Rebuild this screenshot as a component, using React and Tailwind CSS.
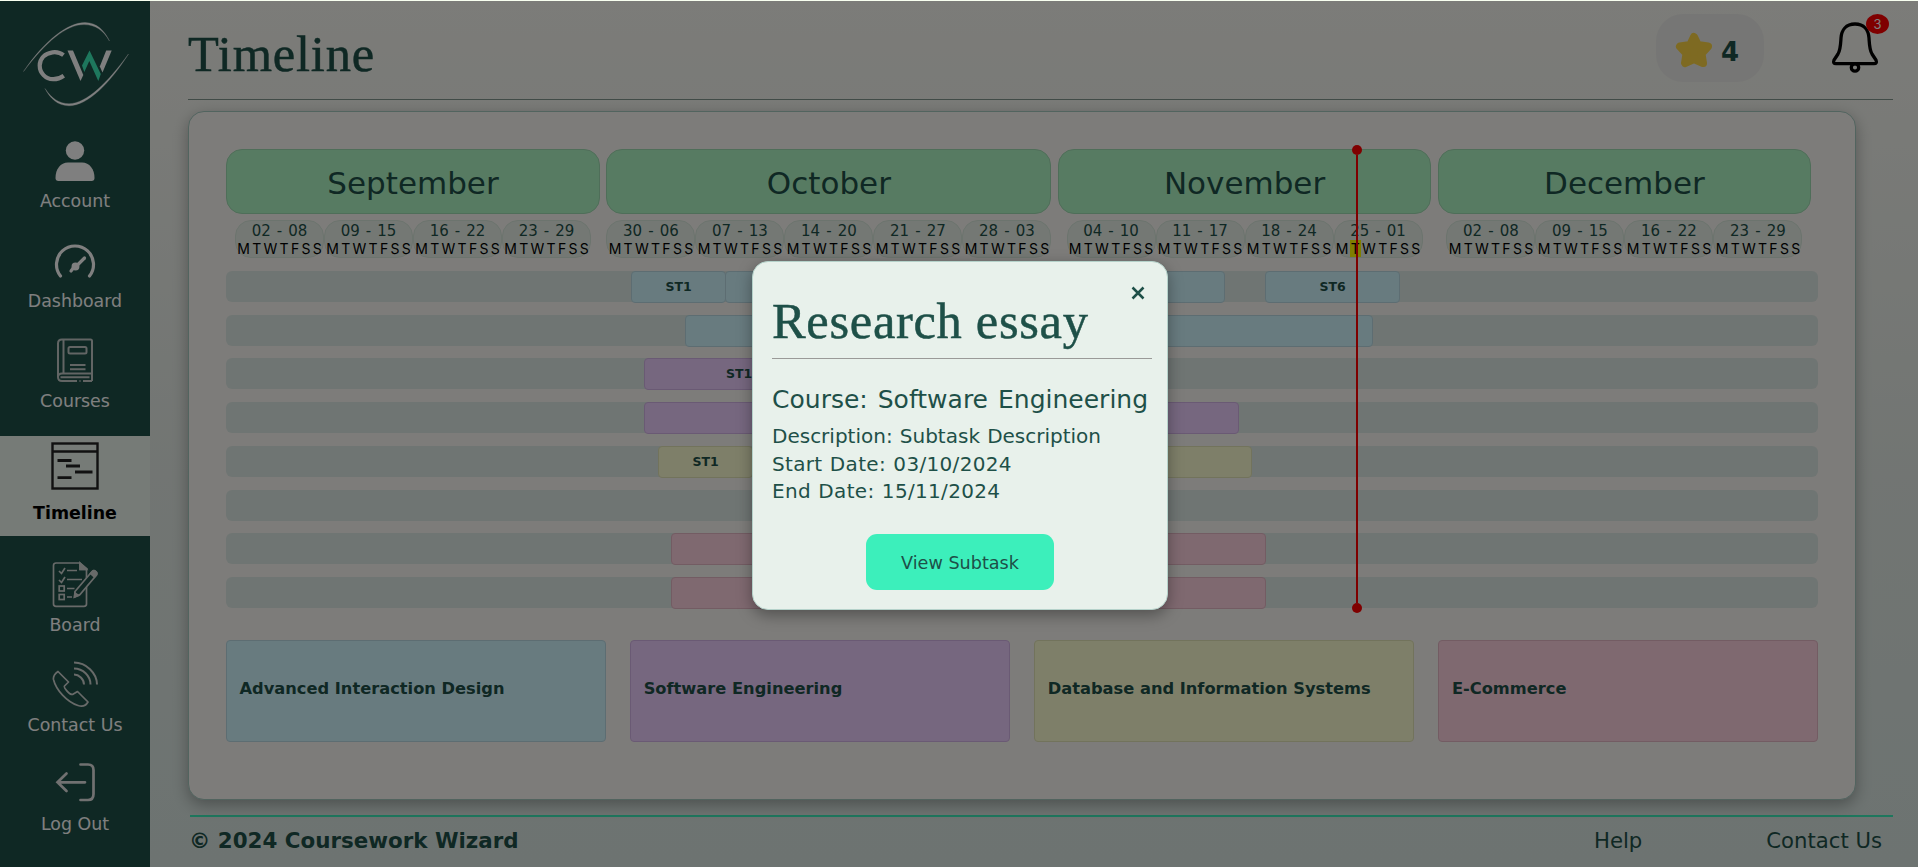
const V = "font-['DejaVu_Sans',sans-serif]";
const SERIF = "font-['Liberation_Serif',serif] [-webkit-text-stroke:0.5px_#1e5048]";

const COLORS = {
  blue: 'bg-[#d1f6ff] border-[#bbdbe5]',
  purple: 'bg-[#edcfff] border-[#d5b5e8]',
  yellow: 'bg-[#fcfed3] border-[#e4e6b8]',
  pink: 'bg-[#ffd2e0] border-[#e6b9c7]',
};

const NAV = [
  { label: 'Account', pad: 'pt-[26px] h-[100px]', gap: 'mt-[5px]', icon: AccountIcon },
  { label: 'Dashboard', pad: 'pt-[27px] h-[99px]', gap: 'mt-[4px]', icon: DashboardIcon },
  { label: 'Courses', pad: 'pt-[25px] h-[126px]', gap: 'mt-[7px]', icon: CoursesIcon },
  { label: 'Timeline', pad: 'pt-[6px] h-[100px]', gap: 'mt-[12px]', icon: TimelineIcon, active: true },
  { label: 'Board', pad: 'pt-[25px] h-[98px]', gap: 'mt-[5px]', icon: BoardIcon },
  { label: 'Contact Us', pad: 'pt-[26px] h-[100px]', gap: 'mt-[6px]', icon: PhoneIcon },
  { label: 'Log Out', pad: 'pt-[26px] h-[100px]', gap: 'mt-[5px]', icon: LogoutIcon },
];

const MONTHS = [
  { name: 'September', w: 'w-[374px]', weeks: ['02 - 08', '09 - 15', '16 - 22', '23 - 29'] },
  { name: 'October', w: 'w-[445px]', weeks: ['30 - 06', '07 - 13', '14 - 20', '21 - 27', '28 - 03'] },
  { name: 'November', w: 'w-[373.500px]', weeks: ['04 - 10', '11 - 17', '18 - 24', '25 - 01'] },
  { name: 'December', w: 'w-[373.500px]', weeks: ['02 - 08', '09 - 15', '16 - 22', '23 - 29'] },
];

const ROWS = [
  [
    { x: 405, w: 95, t: 'ST1', c: 'blue' },
    { x: 499, w: 500, c: 'blue' },
    { x: 1039, w: 135, t: 'ST6', c: 'blue' },
  ],
  [{ x: 459, w: 688, c: 'blue' }],
  [{ x: 418, w: 190, t: 'ST1', c: 'purple' }],
  [{ x: 418, w: 595, c: 'purple' }],
  [
    { x: 432, w: 95, t: 'ST1', c: 'yellow' },
    { x: 526, w: 500, c: 'yellow' },
  ],
  [],
  [{ x: 445, w: 595, c: 'pink' }],
  [{ x: 445, w: 595, c: 'pink' }],
];

const COURSES = [
  ['Advanced Interaction Design', 'blue'],
  ['Software Engineering', 'purple'],
  ['Database and Information Systems', 'yellow'],
  ['E-Commerce', 'pink'],
];

function Logo() {
  return (
    <svg width="110" height="90" viewBox="20 18 110 90" fill="none">
      <path d="M23.500 71.500 C45 40 68 22.500 85 22.500 C97 22.800 104 30 109.500 41 C103 30 96 25 84 24.600 C66 24.500 46 42 23.500 71.500Z" fill="#fff" stroke="#fff" strokeWidth=".3" strokeLinejoin="round" />
      <path d="M128.500 54 C110 83 88 105.500 69 105.800 C57 105.500 50 98 45 88.500 C52 99 59 103.500 69 103.700 C87 103.500 108 82 128.500 54Z" fill="#fff" stroke="#fff" strokeWidth=".3" strokeLinejoin="round" />
      <path d="M63.500 55.200 C60 52.400 56 51.800 52.500 52.300 C45 53.300 39.700 58.500 39.700 65.500 C39.700 73 45.500 79 53 79.200 C57 79.300 60.500 78 63.800 75.700" stroke="#fff" strokeWidth="4.200" />
      <path d="M67.500 50.500 H73 L83.300 75 L80.500 81Z" fill="#fff" />
      <path d="M106.200 50.500 H111.700 L102.500 72.500 L99.800 66.500Z" fill="#fff" />
      <path d="M82 65.500 L89.500 50.500 L100.800 74 L98.300 81 L89.300 61 L84.300 72Z" fill="#3cefbb" />
    </svg>
  );
}
function AccountIcon() {
  return (
    <svg className="shrink-0" width="48" height="48" viewBox="0 0 48 48" fill="#fff">
      <circle cx="24" cy="13.500" r="9.200" />
      <path d="M4.500 41 C4.500 32 9.500 25.500 17 25.500 H31 C38.500 25.500 43.500 32 43.500 41 C43.500 43 42.500 44 40.500 44 H7.500 C5.500 44 4.500 43 4.500 41Z" />
    </svg>
  );
}
function DashboardIcon() {
  return (
    <svg className="shrink-0" width="48" height="48" viewBox="0 0 48 48" fill="none" stroke="#fff" strokeWidth="3.200" strokeLinecap="round">
      <path d="M9.500 38 A18.500 18.500 0 1 1 38.500 38" />
      <path d="M33.500 20 L27 26.500" />
      <path d="M20 33 L23 29" />
      <circle cx="24.500" cy="28.500" r="3.200" fill="#fff" strokeWidth="1.500" />
    </svg>
  );
}
function CoursesIcon() {
  return (
    <svg className="shrink-0" width="48" height="48" viewBox="0 0 48 48" fill="none" stroke="#c4cac8" strokeWidth="2">
      <path d="M41 38.500 V6 C41 5 40.500 4.500 39.500 4.500 H11 C8.500 4.500 7 6 7 8.500 V42 C7 44.500 8.500 46 11 46 H26 M28.500 46 H29.500 M32 46 H41 M7 42 C7 40 8.500 38.500 11 38.500 H41 V46 M12.500 4.500 V38.500 M9.500 42.300 H38.500" />
      <rect x="17.500" y="12" width="18" height="6.500" rx="1.500" />
      <path d="M19 30 H34.500 M19 34.300 H34.500" />
    </svg>
  );
}
function TimelineIcon() {
  return (
    <svg className="shrink-0" width="48" height="48" viewBox="0 0 48 48" fill="none" stroke="#222" strokeWidth="2.400">
      <rect x="1.500" y="1.500" width="45" height="45" />
      <path d="M1 9.500 H47" />
      <path d="M6.500 18.500 H20.500 M15 24 H29 M24 30 H41.500 M6.500 35.700 H20.500" strokeWidth="2.800" />
    </svg>
  );
}
function BoardIcon() {
  return (
    <svg className="shrink-0" width="48" height="48" viewBox="0 0 48 48" fill="none" stroke="#d0d4d2" strokeWidth="1.700">
      <path d="M36 8.500 V8 L29 2 H5 C3.500 2 2.500 3 2.500 4.500 V43 C2.500 44.500 3.500 45.300 5 45.300 H33 C34.500 45.300 35.500 44.500 35.500 43 V26 M35.500 17 V8.500 H29 V2" />
      <path d="M29 2 L35.500 8.500 H29Z" fill="#d0d4d2" />
      <path d="M8 10 L10.500 12.500 L14 7 M8 19 L10.500 21.500 L14 16 M16 9.500 H26 M16 18.500 H31 M16 27.500 H23.500 M16 36 H21" />
      <rect x="8.200" y="25" width="5" height="5" />
      <rect x="8.200" y="33.500" width="5" height="5" />
      <path d="M24 30.500 L41 10.500 C43 8.500 47 11 45.500 14 L29 33.500 L23.500 36Z" fill="#1e5048" />
      <path d="M39.500 12.500 L41.500 10.500 C43.500 8.500 47 11.500 45.300 14 L43.500 16Z M24 32 L23.500 36 L27.500 34.500Z" fill="#d0d4d2" />
    </svg>
  );
}
function PhoneIcon() {
  return (
    <svg className="shrink-0" width="48" height="48" viewBox="0 0 48 48" fill="none" stroke="#d0d4d2" strokeWidth="1.700" strokeLinejoin="round">
      <path d="M7 11.500 L17.500 22 L13.500 26 C12.500 27 17.500 34.500 21.500 34.500 L26.500 31.500 L37 42 C35 45.500 31.500 47 27 45.500 C16 42 5 30 2.500 19.500 C2 16.500 3.500 14 7 11.500Z" />
      <path d="M23 14.500 C28 14.500 33 19 33 24.500 M23 8.500 C32 8.500 39.500 16 39.500 24.500 M23 2.500 C35 2.500 46 13 46 24.500" strokeWidth="2" />
    </svg>
  );
}
function LogoutIcon() {
  return (
    <svg className="shrink-0" width="48" height="48" viewBox="0 0 48 48" fill="none" stroke="#e2e2e2" strokeWidth="2.700" strokeLinecap="round">
      <path d="M29.500 4.500 H37 C40.500 4.500 42.500 6.500 42.500 10 V34 C42.500 38 40.500 40 37 40 H29.500" />
      <path d="M34 22.300 H6.500 M15.500 13.500 L6.500 22.300 L15.500 31" />
    </svg>
  );
}

function Sidebar() {
  return (
    <nav className={`flex w-[150px] shrink-0 flex-col bg-[#1e5048] ${V}`}>
      <div className="flex h-[110px] shrink-0 items-start justify-center pt-[17px]"><Logo /></div>
      {NAV.map(({ label, pad, gap, icon: Icon, active }) => (
        <a key={label} className={`flex shrink-0 flex-col items-center ${pad} ${active ? 'bg-[#ecf6ef] font-bold text-black' : 'text-white'}`}>
          <Icon />
          <span className={`whitespace-nowrap text-[17.400px] leading-[22px] ${gap}`}>{label}</span>
        </a>
      ))}
    </nav>
  );
}

function Header() {
  return (
    <header className="flex h-[99px] w-[1705px] items-start justify-between border-b border-[#82968f]">
      <h1 className={`pt-[24px] text-[50.500px] leading-[58px] tracking-[0.800px] text-[#1e5048] ${SERIF}`}>Timeline</h1>
      <div className="flex items-start pr-[14px]">
        <div className="mt-[13px] flex h-[68px] w-[108px] items-center rounded-[27px] bg-[#ededea] pl-[19px]">
          <svg className="mt-[3px]" width="38" height="36" viewBox="0 0 38 36" fill="#fcd544" stroke="#fcd544" strokeWidth="8" strokeLinejoin="round">
            <path d="M19 5 L22.800 13 L33 14.500 L26.500 21.500 L28 31 L19 27 L10 31 L11.500 21.500 L5 14.500 L15.200 13Z" />
          </svg>
          <span className={`ml-[8px] mt-[8px] text-[26px] font-bold text-[#1e5048] ${V}`}>4</span>
        </div>
        <div className="relative ml-[67px] mt-[19px]">
          <svg width="48" height="54" viewBox="0 0 48 54" fill="none" stroke="#000" strokeWidth="3.300">
            <path d="M24 4 C15 4 10.500 10 10 18 C9.500 26 9.500 30 7 34 L3 40 C2 42.500 3 43.700 5 43.700 H43 C45 43.700 46 42.500 45 40 L41 34 C38.500 30 38.500 26 38 18 C37.500 10 33 4 24 4Z" />
            <circle cx="24" cy="47.500" r="3.700" />
          </svg>
          <span className="absolute left-[35px] top-[-6px] flex h-[20px] w-[23px] items-center justify-center rounded-[50%] bg-[#ff0000] pt-px font-[Inter,sans-serif] text-[13px] text-white">3</span>
        </div>
      </div>
    </header>
  );
}

function Week({ range, today }) {
  return (
    <div className="flex h-[37.500px] w-[89px] flex-col items-center rounded-[16px] border border-[#d9e8dc] bg-[#e8f1e9] pt-[1px]">
      <span className={`text-[15px] leading-[18px] [word-spacing:1.300px] text-[#1e5048] ${V}`}>{range}</span>
      <span className="flex whitespace-pre font-[Inter,sans-serif] text-[14px] leading-[17px] text-black">
        {['M', 'T', 'W', 'T', 'F', 'S', 'S'].map((d, i) => (
          <span key={i} className={`px-[1.150px] ${today && i === 1 ? 'bg-[#ffff00]' : ''}`}>{d}</span>
        ))}
      </span>
    </div>
  );
}

function Timeline() {
  return (
    <section className="relative mt-[11px] h-[689px] w-[1668px] rounded-[16px] border border-[#a4c8bf] bg-[#fbf9f5] px-[37px] pt-[37px] shadow-[0_5px_15px_rgba(0,0,0,0.3)]">
      <div className="flex gap-[6.400px]">
        {MONTHS.map((m) => (
          <div key={m.name} className={`flex shrink-0 flex-col items-center ${m.w}`}>
            <div className={`flex h-[65px] w-full items-center justify-center rounded-[16px] border border-[#9fdcb2] bg-[#aff6c5] pt-[4px] text-[31px] text-[#1e5048] ${V}`}>{m.name}</div>
            <div className="mt-[6px] flex">
              {m.weeks.map((w) => <Week key={w} range={w} today={w === '25 - 01'} />)}
            </div>
          </div>
        ))}
      </div>
      <div className="mt-[13.400px] flex flex-col gap-[12.750px]">
        {ROWS.map((bars, r) => (
          <div key={r} className="relative h-[31px] rounded-[6px] bg-[#dfeae6]">
            {bars.map((b) => (
              <div key={b.x} style={{ left: b.x, width: b.w }} className={`absolute top-0 flex h-[32px] items-center justify-center rounded-[4px] border text-[12.500px] font-bold text-[#1e5048] ${V} ${COLORS[b.c]}`}>{b.t}</div>
            ))}
          </div>
        ))}
      </div>
      <div className="mt-[31.600px] grid grid-cols-4 gap-[24.600px]">
        {COURSES.map(([name, c]) => (
          <div key={name} className={`flex h-[102px] items-center whitespace-nowrap rounded-[4px] border pb-[4px] pl-[12.500px] text-[16.250px] font-bold text-[#1e5048] ${V} ${COLORS[c]}`}>{name}</div>
        ))}
      </div>
      <div className="absolute left-[1163px] top-[33px] flex h-[468px] w-[10px] flex-col items-center">
        <span className="h-[10px] w-[10px] shrink-0 rounded-full bg-[#ff0000]" />
        <span className="w-[2px] flex-1 bg-[#ff0000]" />
        <span className="h-[10px] w-[10px] shrink-0 rounded-full bg-[#ff0000]" />
      </div>
    </section>
  );
}

function Footer() {
  return (
    <footer className={`ml-[2px] mt-[15px] flex h-[52px] w-[1703px] items-start border-t-2 border-[#3cefbb] pt-[9px] text-[21.200px] leading-[30px] text-[#1e5048] ${V}`}>
      <strong className="-ml-px text-[21.400px]">© 2024 Coursework Wizard</strong>
      <span className="ml-auto">Help</span>
      <span className="ml-[124px] mr-[11px]">Contact Us</span>
    </footer>
  );
}

function Modal() {
  return (
    <div className={`relative ml-[752px] mt-[260px] flex h-[349px] w-[416px] flex-col rounded-[16px] border border-[#b5d2ca] bg-[#e8f1eb] pl-[19px] pr-[15px] text-[#1e5048] shadow-[0_5px_15px_rgba(0,0,0,0.35)] ${V}`}>
      <svg className="absolute right-[22px] top-[24px]" width="14" height="14" viewBox="0 0 14 14" stroke="#1e5048" strokeWidth="2.500">
        <path d="M1.500 1.500 L12.500 12.500 M12.500 1.500 L1.500 12.500" />
      </svg>
      <h2 className={`mt-[30px] whitespace-nowrap text-[50.500px] leading-[58px] tracking-[0.680px] ${SERIF}`}>Research essay</h2>
      <hr className="mt-[8px] border-[#9a9a98]" />
      <p className="mt-[25px] whitespace-nowrap text-[25px] leading-[32px] [word-spacing:2px] tracking-[0.010px]">Course: Software Engineering</p>
      <div className="mt-[7px] whitespace-nowrap text-[20px] leading-[27.500px]">
        <p className="[word-spacing:0.800px]">Description: Subtask Description</p>
        <p className="[word-spacing:0.700px] tracking-[0.320px]">Start Date: 03/10/2024</p>
        <p className="[word-spacing:0.700px] tracking-[0.320px]">End Date: 15/11/2024</p>
      </div>
      <button className="ml-[94px] mt-[28px] h-[56px] w-[188px] rounded-[11px] bg-[#3cefbb] pt-[3px] text-[17.600px]">View Subtask</button>
    </div>
  );
}

export default function App() {
  return (
    <div className="relative h-[867px] w-[1918px] overflow-hidden bg-[#f8fff0] pt-px">
      <div className="flex h-[866px] bg-linear-to-b from-[#f8f8f2] via-[#e4ebe6] via-55% to-[#dae7e3]">
        <Sidebar />
        <main className="flex flex-1 flex-col pl-[38px]">
          <Header />
          <Timeline />
          <Footer />
        </main>
      </div>
      <div className="absolute inset-x-0 bottom-0 top-px bg-black/50">
        <Modal />
      </div>
    </div>
  );
}
